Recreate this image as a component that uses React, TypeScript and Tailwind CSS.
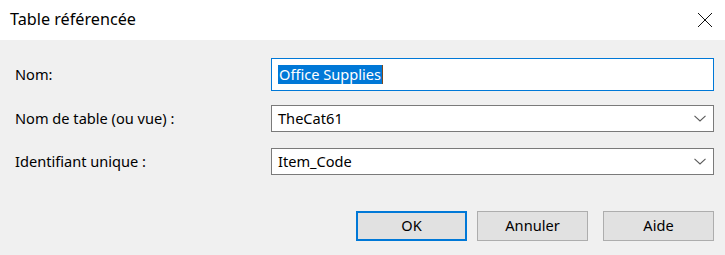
import React from "react";

function Chevron() {
  return (
    <svg width="12" height="7" viewBox="0 0 12 7" className="shrink-0">
      <polyline points="0.5,0.8 6,6 11.5,0.8" fill="none" stroke="#5a5a5a" strokeWidth="1.1" />
    </svg>
  );
}

function Select({ value }: { value: string }) {
  return (
    <div className="flex h-[27px] w-[443px] items-center justify-between border border-[#7a7a7a] bg-white pl-[6px] pr-[7px]">
      <span className="leading-none">{value}</span>
      <Chevron />
    </div>
  );
}

export default function App() {
  return (
    <div
      className="h-[255px] w-[725px] overflow-hidden bg-[#f0f0f0] text-[14.6px] text-black"
      style={{ fontFamily: '"Noto Sans", "Segoe UI", sans-serif' }}
    >
      <div className="flex h-[40px] items-center justify-between bg-white pl-[10px] pr-[12px]">
        <span className="pb-[1px] text-[16.2px]">Table référencée</span>
        <svg width="16" height="16" viewBox="0 0 16 16">
          <path d="M1 1 L15 15 M15 1 L1 15" stroke="#111" strokeWidth="1" fill="none" />
        </svg>
      </div>
      <div className="pl-[15px]">
        <div className="mt-[18px] flex items-center">
          <span className="w-[256px]">Nom:</span>
          <div className="flex h-[33px] w-[443px] items-center border border-[#0078d7] bg-white pl-[6px]">
            <span className="bg-[#0078d7] px-[1px] text-white leading-[19px]">Office Supplies</span>
            <span className="h-[19px] w-[1px] bg-[#7a4a20]" />
          </div>
        </div>
        <div className="mt-[14px] flex items-center">
          <span className="w-[256px]">Nom de table (ou vue) :</span>
          <Select value="TheCat61" />
        </div>
        <div className="mt-[16px] flex items-center">
          <span className="w-[256px]">Identifiant unique :</span>
          <Select value="Item_Code" />
        </div>
        <div className="mt-[36px] flex">
          <div className="ml-[341px] flex h-[30px] w-[111px] items-center justify-center border-2 border-[#0078d7] bg-[#e1e1e1]">
            OK
          </div>
          <div className="ml-[10px] flex h-[30px] w-[111px] items-center justify-center border border-[#adadad] bg-[#e1e1e1]">
            Annuler
          </div>
          <div className="ml-[15px] flex h-[30px] w-[111px] items-center justify-center border border-[#adadad] bg-[#e1e1e1]">
            Aide
          </div>
        </div>
      </div>
    </div>
  );
}
